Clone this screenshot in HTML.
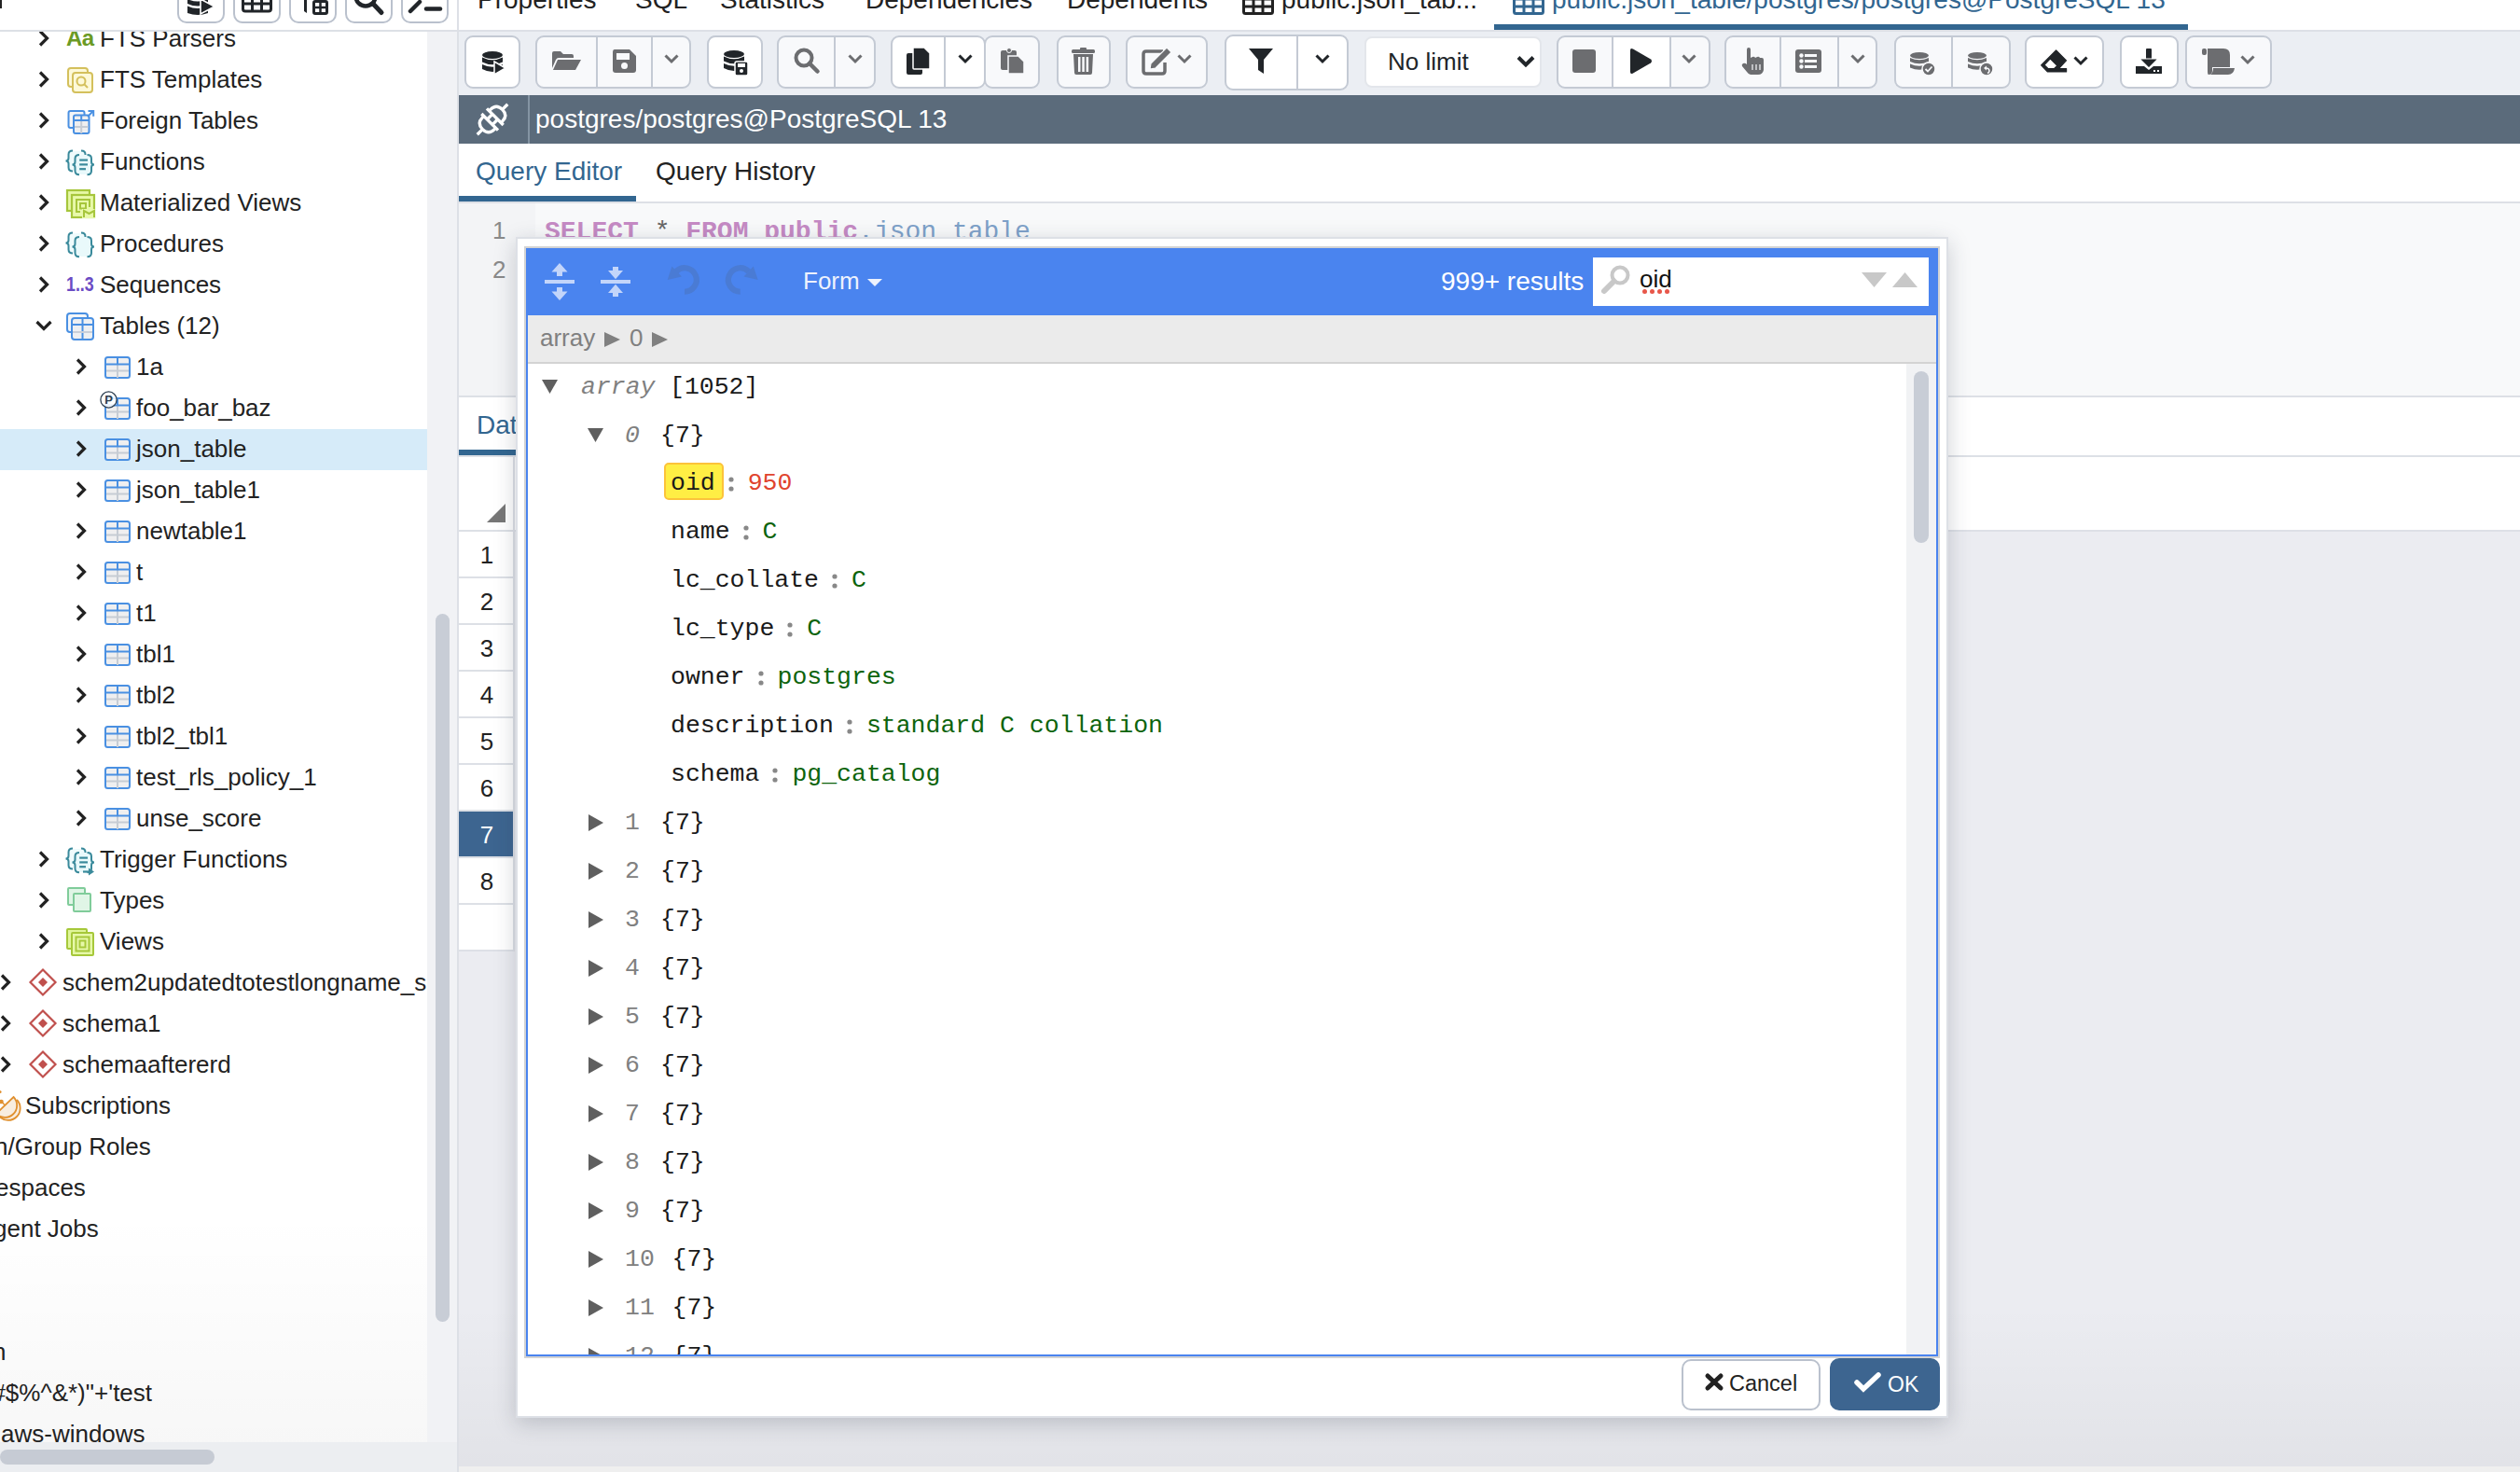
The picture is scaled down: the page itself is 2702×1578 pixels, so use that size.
<!DOCTYPE html><html><head><meta charset="utf-8"><style>
*{box-sizing:border-box;margin:0;padding:0}
html,body{width:2702px;height:1578px;overflow:hidden;background:#fff;font-family:'Liberation Sans', sans-serif;color:#222}
.a{position:absolute}
.t{position:absolute;white-space:nowrap;line-height:1}
svg{position:absolute;overflow:visible}
</style></head><body>
<div class="a" style="left:0px;top:34px;width:458px;height:1512px;background:#fff"></div>
<div class="a" style="left:458px;top:34px;width:32px;height:1512px;background:#f1f2f5"></div>
<div class="a" style="left:0px;top:1300px;width:458px;height:246px;background:linear-gradient(to bottom,rgba(0,0,0,0),rgba(0,0,0,0.03))"></div>
<div class="a" style="left:467px;top:658px;width:15px;height:759px;background:#c8cdd6;border-radius:8px"></div>
<div class="a" style="left:0px;top:1546px;width:490px;height:32px;background:#eceef1"></div>
<div class="a" style="left:0px;top:1554px;width:230px;height:16px;background:#c6cbd4;border-radius:8px"></div>
<svg style="left:41px;top:31.6px;" width="12" height="18" viewBox="0 0 12 18"><polyline points="2,1.5 9.5,9 2,16.5" fill="none" stroke="#222" stroke-width="3.2"/></svg>
<div class="t" style="left:71px;top:28.6px;font-size:24px;color:#6b9a25;font-family:'Liberation Sans', sans-serif;font-weight:bold;letter-spacing:-0.5px">Aa</div>
<div class="t" style="left:107px;top:27.5px;font-size:26px;color:#222;font-family:'Liberation Sans', sans-serif;">FTS Parsers</div>
<svg style="left:41px;top:75.6px;" width="12" height="18" viewBox="0 0 12 18"><polyline points="2,1.5 9.5,9 2,16.5" fill="none" stroke="#222" stroke-width="3.2"/></svg>
<svg style="left:72px;top:71.6px;" width="28" height="28" viewBox="0 0 28 28"><rect x="1" y="1" width="21" height="20" rx="3" fill="#fdf9d8" stroke="#d4c05c" stroke-width="2"/><rect x="6" y="6" width="21" height="21" rx="3" fill="#fdf9d8" stroke="#d4c05c" stroke-width="2"/><circle cx="15" cy="15" r="4.5" fill="none" stroke="#d4c05c" stroke-width="2"/><line x1="18" y1="18" x2="22" y2="22" stroke="#d4c05c" stroke-width="2"/></svg>
<div class="t" style="left:107px;top:71.5px;font-size:26px;color:#222;font-family:'Liberation Sans', sans-serif;">FTS Templates</div>
<svg style="left:41px;top:119.6px;" width="12" height="18" viewBox="0 0 12 18"><polyline points="2,1.5 9.5,9 2,16.5" fill="none" stroke="#222" stroke-width="3.2"/></svg>
<svg style="left:72px;top:114.6px;" width="30" height="30" viewBox="0 0 30 30"><rect x="1.5" y="4" width="17" height="18" rx="2" fill="#f4f5f7" stroke="#4a90e2" stroke-width="2"/><rect x="7" y="8.5" width="16.5" height="19.5" rx="2" fill="#efeff0" stroke="#4a90e2" stroke-width="2"/><line x1="15.2" y1="14" x2="15.2" y2="28" stroke="#c6ccd4" stroke-width="2"/><line x1="8" y1="21" x2="22.5" y2="21" stroke="#c6ccd4" stroke-width="2"/><line x1="7" y1="14" x2="23.5" y2="14" stroke="#4a90e2" stroke-width="2"/><line x1="15.2" y1="8.5" x2="15.2" y2="14" stroke="#4a90e2" stroke-width="2"/><line x1="22" y1="10" x2="28" y2="4" stroke="#4a90e2" stroke-width="2"/><polyline points="22.5,4 28.2,4 28.2,9.7" stroke="#4a90e2" stroke-width="2" fill="none"/></svg>
<div class="t" style="left:107px;top:115.5px;font-size:26px;color:#222;font-family:'Liberation Sans', sans-serif;">Foreign Tables</div>
<svg style="left:41px;top:163.6px;" width="12" height="18" viewBox="0 0 12 18"><polyline points="2,1.5 9.5,9 2,16.5" fill="none" stroke="#222" stroke-width="3.2"/></svg>
<svg style="left:69px;top:159.6px;" width="34" height="32" viewBox="0 0 34 32"><rect x="5" y="2" width="17" height="21" fill="#effbfc"/><path d="M9.0,1.4 Q4.5,1.4 4.5,5.4 L4.5,9.399999999999999 Q4.5,12.399999999999999 1.5,12.399999999999999 Q4.5,12.399999999999999 4.5,15.399999999999999 L4.5,19.4 Q4.5,23.4 9.0,23.4" fill="none" stroke="#3a8a9b" stroke-width="2"/><path d="M18.0,1.4 Q22.5,1.4 22.5,5.4 L22.5,9.399999999999999 Q22.5,12.399999999999999 25.5,12.399999999999999 Q22.5,12.399999999999999 22.5,15.399999999999999 L22.5,19.4 Q22.5,23.4 18.0,23.4" fill="none" stroke="#3a8a9b" stroke-width="2"/><rect x="11.5" y="6" width="17.5" height="21" fill="#e9f9fb"/><path d="M16.0,5.9 Q11.5,5.9 11.5,9.9 L11.5,13.55 Q11.5,16.55 8.5,16.55 Q11.5,16.55 11.5,19.55 L11.5,23.2 Q11.5,27.2 16.0,27.2" fill="none" stroke="#3a8a9b" stroke-width="2"/><path d="M24.5,5.9 Q29,5.9 29,9.9 L29,13.55 Q29,16.55 32,16.55 Q29,16.55 29,19.55 L29,23.2 Q29,27.2 24.5,27.2" fill="none" stroke="#3a8a9b" stroke-width="2"/><g stroke="#3a8a9b" stroke-width="2.2"><line x1="16.2" y1="11.6" x2="25" y2="11.6"/><line x1="16.2" y1="16.4" x2="25" y2="16.4"/><line x1="16.2" y1="21.2" x2="23" y2="21.2"/></g></svg>
<div class="t" style="left:107px;top:159.5px;font-size:26px;color:#222;font-family:'Liberation Sans', sans-serif;">Functions</div>
<svg style="left:41px;top:207.6px;" width="12" height="18" viewBox="0 0 12 18"><polyline points="2,1.5 9.5,9 2,16.5" fill="none" stroke="#222" stroke-width="3.2"/></svg>
<svg style="left:71px;top:202.6px;" width="31" height="31" viewBox="0 0 31 31"><rect x="1" y="1" width="24" height="22" fill="#e6f8a6" stroke="#a6c63c" stroke-width="2.2"/><rect x="6" y="6" width="24" height="24" fill="#e8f9aa" stroke="#a6c63c" stroke-width="2.2"/><path d="M15,24 L11,24 L11,11 L25,11 L25,19" fill="none" stroke="#a6c63c" stroke-width="2"/><rect x="15" y="15" width="6" height="5.5" fill="none" stroke="#a6c63c" stroke-width="2"/><rect x="17" y="21" width="14" height="10" fill="#e8f9aa"/><path d="M19,30 L19,23 L24.5,26 L30,23 L30,30" fill="none" stroke="#a6c63c" stroke-width="2"/></svg>
<div class="t" style="left:107px;top:203.5px;font-size:26px;color:#222;font-family:'Liberation Sans', sans-serif;">Materialized Views</div>
<svg style="left:41px;top:251.60000000000002px;" width="12" height="18" viewBox="0 0 12 18"><polyline points="2,1.5 9.5,9 2,16.5" fill="none" stroke="#222" stroke-width="3.2"/></svg>
<svg style="left:69px;top:247.60000000000002px;" width="34" height="32" viewBox="0 0 34 32"><rect x="5" y="2" width="17" height="21" fill="#effbfc"/><path d="M9.0,1.4 Q4.5,1.4 4.5,5.4 L4.5,9.399999999999999 Q4.5,12.399999999999999 1.5,12.399999999999999 Q4.5,12.399999999999999 4.5,15.399999999999999 L4.5,19.4 Q4.5,23.4 9.0,23.4" fill="none" stroke="#3a8a9b" stroke-width="2"/><path d="M18.0,1.4 Q22.5,1.4 22.5,5.4 L22.5,9.399999999999999 Q22.5,12.399999999999999 25.5,12.399999999999999 Q22.5,12.399999999999999 22.5,15.399999999999999 L22.5,19.4 Q22.5,23.4 18.0,23.4" fill="none" stroke="#3a8a9b" stroke-width="2"/><rect x="11.5" y="6" width="17.5" height="21" fill="#e9f9fb"/><path d="M16.0,5.9 Q11.5,5.9 11.5,9.9 L11.5,13.55 Q11.5,16.55 8.5,16.55 Q11.5,16.55 11.5,19.55 L11.5,23.2 Q11.5,27.2 16.0,27.2" fill="none" stroke="#3a8a9b" stroke-width="2"/><path d="M24.5,5.9 Q29,5.9 29,9.9 L29,13.55 Q29,16.55 32,16.55 Q29,16.55 29,19.55 L29,23.2 Q29,27.2 24.5,27.2" fill="none" stroke="#3a8a9b" stroke-width="2"/></svg>
<div class="t" style="left:107px;top:247.5px;font-size:26px;color:#222;font-family:'Liberation Sans', sans-serif;">Procedures</div>
<svg style="left:41px;top:295.6px;" width="12" height="18" viewBox="0 0 12 18"><polyline points="2,1.5 9.5,9 2,16.5" fill="none" stroke="#222" stroke-width="3.2"/></svg>
<div class="t" style="left:71px;top:294.4px;font-size:22px;color:#6a4bc4;font-family:'Liberation Sans', sans-serif;font-weight:bold;transform:scaleX(0.81);transform-origin:0 0">1..3</div>
<div class="t" style="left:107px;top:291.5px;font-size:26px;color:#222;font-family:'Liberation Sans', sans-serif;">Sequences</div>
<svg style="left:38px;top:342.6px;" width="18" height="12" viewBox="0 0 18 12"><polyline points="1.5,2 9,9.5 16.5,2" fill="none" stroke="#222" stroke-width="3.2"/></svg>
<svg style="left:71px;top:334.6px;" width="30" height="30" viewBox="0 0 30 30"><rect x="1" y="1" width="22" height="20" rx="3" fill="#f4f6f8" stroke="#4a90e2" stroke-width="2"/><rect x="6" y="6" width="23" height="23" rx="3" fill="#eef0f2" stroke="#4a90e2" stroke-width="2"/><line x1="6" y1="13" x2="29" y2="13" stroke="#4a90e2" stroke-width="2"/><line x1="17.5" y1="6" x2="17.5" y2="29" stroke="#4a90e2" stroke-width="2"/><line x1="7" y1="21" x2="28" y2="21" stroke="#c9cfd8" stroke-width="2"/></svg>
<div class="t" style="left:107px;top:335.5px;font-size:26px;color:#222;font-family:'Liberation Sans', sans-serif;">Tables (12)</div>
<svg style="left:41px;top:911.6px;" width="12" height="18" viewBox="0 0 12 18"><polyline points="2,1.5 9.5,9 2,16.5" fill="none" stroke="#222" stroke-width="3.2"/></svg>
<svg style="left:69px;top:907.6px;" width="34" height="32" viewBox="0 0 34 32"><rect x="5" y="2" width="17" height="21" fill="#effbfc"/><path d="M9.0,1.4 Q4.5,1.4 4.5,5.4 L4.5,9.399999999999999 Q4.5,12.399999999999999 1.5,12.399999999999999 Q4.5,12.399999999999999 4.5,15.399999999999999 L4.5,19.4 Q4.5,23.4 9.0,23.4" fill="none" stroke="#3a8a9b" stroke-width="2"/><path d="M18.0,1.4 Q22.5,1.4 22.5,5.4 L22.5,9.399999999999999 Q22.5,12.399999999999999 25.5,12.399999999999999 Q22.5,12.399999999999999 22.5,15.399999999999999 L22.5,19.4 Q22.5,23.4 18.0,23.4" fill="none" stroke="#3a8a9b" stroke-width="2"/><rect x="11.5" y="6" width="17.5" height="21" fill="#e9f9fb"/><path d="M16.0,5.9 Q11.5,5.9 11.5,9.9 L11.5,13.55 Q11.5,16.55 8.5,16.55 Q11.5,16.55 11.5,19.55 L11.5,23.2 Q11.5,27.2 16.0,27.2" fill="none" stroke="#3a8a9b" stroke-width="2"/><path d="M24.5,5.9 Q29,5.9 29,9.9 L29,13.55 Q29,16.55 32,16.55 Q29,16.55 29,19.55 L29,23.2 Q29,27.2 24.5,27.2" fill="none" stroke="#3a8a9b" stroke-width="2"/><g stroke="#3a8a9b" stroke-width="2.2"><line x1="16.2" y1="11.6" x2="25" y2="11.6"/><line x1="16.2" y1="16.4" x2="25" y2="16.4"/><line x1="16.2" y1="21.2" x2="23" y2="21.2"/></g><line x1="20" y1="26.5" x2="28" y2="26.5" stroke="#3a8a9b" stroke-width="2.2"/><polygon points="26,22.5 32,26.5 26,30.5" fill="#3a8a9b"/></svg>
<div class="t" style="left:107px;top:907.5px;font-size:26px;color:#222;font-family:'Liberation Sans', sans-serif;">Trigger Functions</div>
<svg style="left:41px;top:955.6px;" width="12" height="18" viewBox="0 0 12 18"><polyline points="2,1.5 9.5,9 2,16.5" fill="none" stroke="#222" stroke-width="3.2"/></svg>
<svg style="left:72px;top:950.6px;" width="28" height="28" viewBox="0 0 28 28"><rect x="1" y="1" width="18" height="18" rx="1" fill="#e0f5e6" stroke="#80cc9a" stroke-width="2"/><rect x="7" y="7" width="18" height="19" rx="1" fill="#e0f5e6" stroke="#80cc9a" stroke-width="2"/></svg>
<div class="t" style="left:107px;top:951.5px;font-size:26px;color:#222;font-family:'Liberation Sans', sans-serif;">Types</div>
<svg style="left:41px;top:999.6px;" width="12" height="18" viewBox="0 0 12 18"><polyline points="2,1.5 9.5,9 2,16.5" fill="none" stroke="#222" stroke-width="3.2"/></svg>
<svg style="left:71px;top:994.6px;" width="30" height="30" viewBox="0 0 30 30"><rect x="1" y="1" width="21" height="21" rx="1" fill="#dff59a" stroke="#a6c83a" stroke-width="2"/><rect x="6" y="5" width="23" height="24" rx="1" fill="#e6f8a8" stroke="#a6c83a" stroke-width="2"/><rect x="10.5" y="9.5" width="14" height="15" fill="none" stroke="#a6c83a" stroke-width="2"/><rect x="14.5" y="13.5" width="6" height="7" fill="none" stroke="#a6c83a" stroke-width="2"/></svg>
<div class="t" style="left:107px;top:995.5px;font-size:26px;color:#222;font-family:'Liberation Sans', sans-serif;">Views</div>

<div class="a" style="left:0px;top:460px;width:458px;height:44px;background:#d6ebf9"></div>
<svg style="left:81px;top:383.6px;" width="12" height="18" viewBox="0 0 12 18"><polyline points="2,1.5 9.5,9 2,16.5" fill="none" stroke="#222" stroke-width="3.2"/></svg>
<svg style="left:112px;top:381.6px;" width="28" height="24" viewBox="0 0 28 24"><rect x="1" y="1" width="26" height="22" rx="2.5" fill="#efeff0" stroke="#4a90e2" stroke-width="2"/><line x1="14" y1="9" x2="14" y2="23" stroke="#c6ccd4" stroke-width="2"/><line x1="2" y1="15.5" x2="26" y2="15.5" stroke="#c6ccd4" stroke-width="2"/><line x1="1" y1="8.5" x2="27" y2="8.5" stroke="#4a90e2" stroke-width="2"/><line x1="14" y1="1" x2="14" y2="9" stroke="#4a90e2" stroke-width="2"/></svg>
<div class="t" style="left:146px;top:379.5px;font-size:26px;color:#222;font-family:'Liberation Sans', sans-serif;">1a</div>
<svg style="left:81px;top:427.6px;" width="12" height="18" viewBox="0 0 12 18"><polyline points="2,1.5 9.5,9 2,16.5" fill="none" stroke="#222" stroke-width="3.2"/></svg>
<svg style="left:112px;top:425.6px;" width="28" height="24" viewBox="0 0 28 24"><rect x="1" y="1" width="26" height="22" rx="2.5" fill="#efeff0" stroke="#4a90e2" stroke-width="2"/><line x1="14" y1="9" x2="14" y2="23" stroke="#c6ccd4" stroke-width="2"/><line x1="2" y1="15.5" x2="26" y2="15.5" stroke="#c6ccd4" stroke-width="2"/><line x1="1" y1="8.5" x2="27" y2="8.5" stroke="#4a90e2" stroke-width="2"/><line x1="14" y1="1" x2="14" y2="9" stroke="#4a90e2" stroke-width="2"/></svg>
<svg style="left:107px;top:418.6px;" width="20" height="20" viewBox="0 0 20 20"><circle cx="9.5" cy="9.5" r="8.6" fill="#fff" fill-opacity="0.85" stroke="#2c3e50" stroke-width="1.3"/><text x="9.6" y="14" font-size="13" font-weight="bold" text-anchor="middle" fill="#2c3e50" font-family="Liberation Sans">P</text></svg>
<div class="t" style="left:146px;top:423.5px;font-size:26px;color:#222;font-family:'Liberation Sans', sans-serif;">foo_bar_baz</div>
<svg style="left:81px;top:471.6px;" width="12" height="18" viewBox="0 0 12 18"><polyline points="2,1.5 9.5,9 2,16.5" fill="none" stroke="#222" stroke-width="3.2"/></svg>
<svg style="left:112px;top:469.6px;" width="28" height="24" viewBox="0 0 28 24"><rect x="1" y="1" width="26" height="22" rx="2.5" fill="#efeff0" stroke="#4a90e2" stroke-width="2"/><line x1="14" y1="9" x2="14" y2="23" stroke="#c6ccd4" stroke-width="2"/><line x1="2" y1="15.5" x2="26" y2="15.5" stroke="#c6ccd4" stroke-width="2"/><line x1="1" y1="8.5" x2="27" y2="8.5" stroke="#4a90e2" stroke-width="2"/><line x1="14" y1="1" x2="14" y2="9" stroke="#4a90e2" stroke-width="2"/></svg>
<div class="t" style="left:146px;top:467.5px;font-size:26px;color:#222;font-family:'Liberation Sans', sans-serif;">json_table</div>
<svg style="left:81px;top:515.6px;" width="12" height="18" viewBox="0 0 12 18"><polyline points="2,1.5 9.5,9 2,16.5" fill="none" stroke="#222" stroke-width="3.2"/></svg>
<svg style="left:112px;top:513.6px;" width="28" height="24" viewBox="0 0 28 24"><rect x="1" y="1" width="26" height="22" rx="2.5" fill="#efeff0" stroke="#4a90e2" stroke-width="2"/><line x1="14" y1="9" x2="14" y2="23" stroke="#c6ccd4" stroke-width="2"/><line x1="2" y1="15.5" x2="26" y2="15.5" stroke="#c6ccd4" stroke-width="2"/><line x1="1" y1="8.5" x2="27" y2="8.5" stroke="#4a90e2" stroke-width="2"/><line x1="14" y1="1" x2="14" y2="9" stroke="#4a90e2" stroke-width="2"/></svg>
<div class="t" style="left:146px;top:511.5px;font-size:26px;color:#222;font-family:'Liberation Sans', sans-serif;">json_table1</div>
<svg style="left:81px;top:559.6px;" width="12" height="18" viewBox="0 0 12 18"><polyline points="2,1.5 9.5,9 2,16.5" fill="none" stroke="#222" stroke-width="3.2"/></svg>
<svg style="left:112px;top:557.6px;" width="28" height="24" viewBox="0 0 28 24"><rect x="1" y="1" width="26" height="22" rx="2.5" fill="#efeff0" stroke="#4a90e2" stroke-width="2"/><line x1="14" y1="9" x2="14" y2="23" stroke="#c6ccd4" stroke-width="2"/><line x1="2" y1="15.5" x2="26" y2="15.5" stroke="#c6ccd4" stroke-width="2"/><line x1="1" y1="8.5" x2="27" y2="8.5" stroke="#4a90e2" stroke-width="2"/><line x1="14" y1="1" x2="14" y2="9" stroke="#4a90e2" stroke-width="2"/></svg>
<div class="t" style="left:146px;top:555.5px;font-size:26px;color:#222;font-family:'Liberation Sans', sans-serif;">newtable1</div>
<svg style="left:81px;top:603.6px;" width="12" height="18" viewBox="0 0 12 18"><polyline points="2,1.5 9.5,9 2,16.5" fill="none" stroke="#222" stroke-width="3.2"/></svg>
<svg style="left:112px;top:601.6px;" width="28" height="24" viewBox="0 0 28 24"><rect x="1" y="1" width="26" height="22" rx="2.5" fill="#efeff0" stroke="#4a90e2" stroke-width="2"/><line x1="14" y1="9" x2="14" y2="23" stroke="#c6ccd4" stroke-width="2"/><line x1="2" y1="15.5" x2="26" y2="15.5" stroke="#c6ccd4" stroke-width="2"/><line x1="1" y1="8.5" x2="27" y2="8.5" stroke="#4a90e2" stroke-width="2"/><line x1="14" y1="1" x2="14" y2="9" stroke="#4a90e2" stroke-width="2"/></svg>
<div class="t" style="left:146px;top:599.5px;font-size:26px;color:#222;font-family:'Liberation Sans', sans-serif;">t</div>
<svg style="left:81px;top:647.6px;" width="12" height="18" viewBox="0 0 12 18"><polyline points="2,1.5 9.5,9 2,16.5" fill="none" stroke="#222" stroke-width="3.2"/></svg>
<svg style="left:112px;top:645.6px;" width="28" height="24" viewBox="0 0 28 24"><rect x="1" y="1" width="26" height="22" rx="2.5" fill="#efeff0" stroke="#4a90e2" stroke-width="2"/><line x1="14" y1="9" x2="14" y2="23" stroke="#c6ccd4" stroke-width="2"/><line x1="2" y1="15.5" x2="26" y2="15.5" stroke="#c6ccd4" stroke-width="2"/><line x1="1" y1="8.5" x2="27" y2="8.5" stroke="#4a90e2" stroke-width="2"/><line x1="14" y1="1" x2="14" y2="9" stroke="#4a90e2" stroke-width="2"/></svg>
<div class="t" style="left:146px;top:643.5px;font-size:26px;color:#222;font-family:'Liberation Sans', sans-serif;">t1</div>
<svg style="left:81px;top:691.6px;" width="12" height="18" viewBox="0 0 12 18"><polyline points="2,1.5 9.5,9 2,16.5" fill="none" stroke="#222" stroke-width="3.2"/></svg>
<svg style="left:112px;top:689.6px;" width="28" height="24" viewBox="0 0 28 24"><rect x="1" y="1" width="26" height="22" rx="2.5" fill="#efeff0" stroke="#4a90e2" stroke-width="2"/><line x1="14" y1="9" x2="14" y2="23" stroke="#c6ccd4" stroke-width="2"/><line x1="2" y1="15.5" x2="26" y2="15.5" stroke="#c6ccd4" stroke-width="2"/><line x1="1" y1="8.5" x2="27" y2="8.5" stroke="#4a90e2" stroke-width="2"/><line x1="14" y1="1" x2="14" y2="9" stroke="#4a90e2" stroke-width="2"/></svg>
<div class="t" style="left:146px;top:687.5px;font-size:26px;color:#222;font-family:'Liberation Sans', sans-serif;">tbl1</div>
<svg style="left:81px;top:735.6px;" width="12" height="18" viewBox="0 0 12 18"><polyline points="2,1.5 9.5,9 2,16.5" fill="none" stroke="#222" stroke-width="3.2"/></svg>
<svg style="left:112px;top:733.6px;" width="28" height="24" viewBox="0 0 28 24"><rect x="1" y="1" width="26" height="22" rx="2.5" fill="#efeff0" stroke="#4a90e2" stroke-width="2"/><line x1="14" y1="9" x2="14" y2="23" stroke="#c6ccd4" stroke-width="2"/><line x1="2" y1="15.5" x2="26" y2="15.5" stroke="#c6ccd4" stroke-width="2"/><line x1="1" y1="8.5" x2="27" y2="8.5" stroke="#4a90e2" stroke-width="2"/><line x1="14" y1="1" x2="14" y2="9" stroke="#4a90e2" stroke-width="2"/></svg>
<div class="t" style="left:146px;top:731.5px;font-size:26px;color:#222;font-family:'Liberation Sans', sans-serif;">tbl2</div>
<svg style="left:81px;top:779.6px;" width="12" height="18" viewBox="0 0 12 18"><polyline points="2,1.5 9.5,9 2,16.5" fill="none" stroke="#222" stroke-width="3.2"/></svg>
<svg style="left:112px;top:777.6px;" width="28" height="24" viewBox="0 0 28 24"><rect x="1" y="1" width="26" height="22" rx="2.5" fill="#efeff0" stroke="#4a90e2" stroke-width="2"/><line x1="14" y1="9" x2="14" y2="23" stroke="#c6ccd4" stroke-width="2"/><line x1="2" y1="15.5" x2="26" y2="15.5" stroke="#c6ccd4" stroke-width="2"/><line x1="1" y1="8.5" x2="27" y2="8.5" stroke="#4a90e2" stroke-width="2"/><line x1="14" y1="1" x2="14" y2="9" stroke="#4a90e2" stroke-width="2"/></svg>
<div class="t" style="left:146px;top:775.5px;font-size:26px;color:#222;font-family:'Liberation Sans', sans-serif;">tbl2_tbl1</div>
<svg style="left:81px;top:823.6px;" width="12" height="18" viewBox="0 0 12 18"><polyline points="2,1.5 9.5,9 2,16.5" fill="none" stroke="#222" stroke-width="3.2"/></svg>
<svg style="left:112px;top:821.6px;" width="28" height="24" viewBox="0 0 28 24"><rect x="1" y="1" width="26" height="22" rx="2.5" fill="#efeff0" stroke="#4a90e2" stroke-width="2"/><line x1="14" y1="9" x2="14" y2="23" stroke="#c6ccd4" stroke-width="2"/><line x1="2" y1="15.5" x2="26" y2="15.5" stroke="#c6ccd4" stroke-width="2"/><line x1="1" y1="8.5" x2="27" y2="8.5" stroke="#4a90e2" stroke-width="2"/><line x1="14" y1="1" x2="14" y2="9" stroke="#4a90e2" stroke-width="2"/></svg>
<div class="t" style="left:146px;top:819.5px;font-size:26px;color:#222;font-family:'Liberation Sans', sans-serif;">test_rls_policy_1</div>
<svg style="left:81px;top:867.6px;" width="12" height="18" viewBox="0 0 12 18"><polyline points="2,1.5 9.5,9 2,16.5" fill="none" stroke="#222" stroke-width="3.2"/></svg>
<svg style="left:112px;top:865.6px;" width="28" height="24" viewBox="0 0 28 24"><rect x="1" y="1" width="26" height="22" rx="2.5" fill="#efeff0" stroke="#4a90e2" stroke-width="2"/><line x1="14" y1="9" x2="14" y2="23" stroke="#c6ccd4" stroke-width="2"/><line x1="2" y1="15.5" x2="26" y2="15.5" stroke="#c6ccd4" stroke-width="2"/><line x1="1" y1="8.5" x2="27" y2="8.5" stroke="#4a90e2" stroke-width="2"/><line x1="14" y1="1" x2="14" y2="9" stroke="#4a90e2" stroke-width="2"/></svg>
<div class="t" style="left:146px;top:863.5px;font-size:26px;color:#222;font-family:'Liberation Sans', sans-serif;">unse_score</div>
<svg style="left:0px;top:1043.6px;" width="12" height="18" viewBox="0 0 12 18"><polyline points="2,1.5 9.5,9 2,16.5" fill="none" stroke="#222" stroke-width="3.2"/></svg>
<svg style="left:31px;top:1037.6px;" width="30" height="30" viewBox="0 0 30 30"><polygon points="15,1.5 28.5,15 15,28.5 1.5,15" fill="#fff" stroke="#c0504d" stroke-width="2.2"/><polygon points="15,10 20,15 15,20 10,15" fill="#c0504d"/></svg>
<div class="t" style="left:67px;top:1039.5px;font-size:26px;color:#222;font-family:'Liberation Sans', sans-serif;">schem2updatedtotestlongname_s</div>
<svg style="left:0px;top:1087.6px;" width="12" height="18" viewBox="0 0 12 18"><polyline points="2,1.5 9.5,9 2,16.5" fill="none" stroke="#222" stroke-width="3.2"/></svg>
<svg style="left:31px;top:1081.6px;" width="30" height="30" viewBox="0 0 30 30"><polygon points="15,1.5 28.5,15 15,28.5 1.5,15" fill="#fff" stroke="#c0504d" stroke-width="2.2"/><polygon points="15,10 20,15 15,20 10,15" fill="#c0504d"/></svg>
<div class="t" style="left:67px;top:1083.5px;font-size:26px;color:#222;font-family:'Liberation Sans', sans-serif;">schema1</div>
<svg style="left:0px;top:1131.6px;" width="12" height="18" viewBox="0 0 12 18"><polyline points="2,1.5 9.5,9 2,16.5" fill="none" stroke="#222" stroke-width="3.2"/></svg>
<svg style="left:31px;top:1125.6px;" width="30" height="30" viewBox="0 0 30 30"><polygon points="15,1.5 28.5,15 15,28.5 1.5,15" fill="#fff" stroke="#c0504d" stroke-width="2.2"/><polygon points="15,10 20,15 15,20 10,15" fill="#c0504d"/></svg>
<div class="t" style="left:67px;top:1127.5px;font-size:26px;color:#222;font-family:'Liberation Sans', sans-serif;">schemaaftererd</div>
<svg style="left:-10px;top:1160px;" width="40" height="50" viewBox="0 0 40 50"><path d="M28,19 A12.9,12.9 0 0 1 9.5,37" fill="#f8ede0" stroke="#e0902f" stroke-width="1.8"/><path d="M24.5,16 A12.9,12.9 0 0 1 6,34 Z" fill="#f8ede0" stroke="#e0902f" stroke-width="1.8"/><circle cx="11.5" cy="21" r="2.3" fill="#e0902f"/><line x1="11.5" y1="21" x2="15" y2="24.5" stroke="#e0902f" stroke-width="1.5"/><circle cx="10" cy="10.5" r="1.6" fill="#e0902f"/></svg>
<div class="t" style="left:27px;top:1171.5px;font-size:26px;color:#222;font-family:'Liberation Sans', sans-serif;">Subscriptions</div>
<div class="t" style="left:-6px;top:1215.5px;font-size:26px;color:#222;font-family:'Liberation Sans', sans-serif;">n/Group Roles</div>
<div class="t" style="left:-5px;top:1259.5px;font-size:26px;color:#222;font-family:'Liberation Sans', sans-serif;">espaces</div>
<div class="t" style="left:-7px;top:1303.5px;font-size:26px;color:#222;font-family:'Liberation Sans', sans-serif;">gent Jobs</div>
<div class="t" style="left:-8px;top:1435.5px;font-size:26px;color:#222;font-family:'Liberation Sans', sans-serif;">n</div>
<div class="t" style="left:-8.6px;top:1479.5px;font-size:26px;color:#222;font-family:'Liberation Sans', sans-serif;">#$%^&amp;*)"+'test</div>
<div class="t" style="left:1px;top:1523.5px;font-size:26px;color:#222;font-family:'Liberation Sans', sans-serif;">aws-windows</div>
<div class="a" style="left:0px;top:0px;width:490px;height:32px;background:#fff"></div>
<div class="a" style="left:190px;top:-30px;width:51px;height:55px;border:2px solid #bac1cd;border-radius:10px;background:#fff"></div>
<div class="a" style="left:250px;top:-30px;width:51px;height:55px;border:2px solid #bac1cd;border-radius:10px;background:#fff"></div>
<div class="a" style="left:310px;top:-30px;width:51px;height:55px;border:2px solid #bac1cd;border-radius:10px;background:#fff"></div>
<div class="a" style="left:370px;top:-30px;width:51px;height:55px;border:2px solid #bac1cd;border-radius:10px;background:#fff"></div>
<div class="a" style="left:430px;top:-30px;width:51px;height:55px;border:2px solid #bac1cd;border-radius:10px;background:#fff"></div>
<div class="a" style="left:0px;top:0px;width:2px;height:9px;background:#222"></div>
<svg style="left:201px;top:-6px;" width="30" height="26" viewBox="0 0 30 26"><ellipse cx="11" cy="2" rx="11" ry="4" fill="#212529"/><path d="M0,5 Q11,10 22,5 L22,10 Q11,15 0,10Z" fill="#212529"/><path d="M0,12.5 Q11,17.5 22,12.5 L22,20 Q11,24 0,20Z" fill="#212529"/><polygon points="14,5 29,13 14,21" fill="#212529" stroke="#fff" stroke-width="1.6"/></svg>
<svg style="left:259px;top:-8px;" width="33" height="22" viewBox="0 0 33 22"><rect x="1.5" y="-4" width="30" height="24" rx="2.5" fill="none" stroke="#212529" stroke-width="3"/><line x1="1.5" y1="4" x2="31.5" y2="4" stroke="#212529" stroke-width="3"/><line x1="1.5" y1="12" x2="31.5" y2="12" stroke="#212529" stroke-width="3"/><line x1="11.5" y1="-4" x2="11.5" y2="20" stroke="#212529" stroke-width="3"/><line x1="21.5" y1="-4" x2="21.5" y2="20" stroke="#212529" stroke-width="3"/></svg>
<svg style="left:326px;top:-8px;" width="26" height="24" viewBox="0 0 26 24"><path d="M0,8 L3,8 L3,22 L0,20Z" fill="#212529"/><rect x="10.5" y="9.5" width="14" height="13" rx="1.5" fill="none" stroke="#212529" stroke-width="3"/><line x1="10.5" y1="16" x2="24.5" y2="16" stroke="#212529" stroke-width="2.5"/><line x1="17.5" y1="9.5" x2="17.5" y2="22.5" stroke="#212529" stroke-width="2.5"/></svg>
<svg style="left:379px;top:-9px;" width="34" height="30" viewBox="0 0 34 30"><circle cx="13" cy="5" r="10.5" fill="none" stroke="#212529" stroke-width="4.5"/><line x1="21.5" y1="13.5" x2="30" y2="22.5" stroke="#212529" stroke-width="5" stroke-linecap="round"/></svg>
<svg style="left:438px;top:-2px;" width="36" height="18" viewBox="0 0 36 18"><polyline points="2,14 12,4" fill="none" stroke="#212529" stroke-width="4.5" stroke-linecap="round"/><line x1="19" y1="11.5" x2="34" y2="11.5" stroke="#212529" stroke-width="4.5" stroke-linecap="round"/></svg>
<div class="a" style="left:490px;top:0px;width:2px;height:1578px;background:#dde0e6"></div>
<div class="a" style="left:0px;top:32px;width:490px;height:2px;background:#dde0e6"></div>
<div class="a" style="left:492px;top:0px;width:2210px;height:32px;background:#fff"></div>
<div class="a" style="left:492px;top:32px;width:2210px;height:2px;background:#dde0e6"></div>
<div class="t" style="left:512px;top:-13.8px;font-size:28px;color:#222;font-family:'Liberation Sans', sans-serif;">Properties</div>
<div class="t" style="left:681px;top:-13.8px;font-size:28px;color:#222;font-family:'Liberation Sans', sans-serif;">SQL</div>
<div class="t" style="left:772px;top:-13.8px;font-size:28px;color:#222;font-family:'Liberation Sans', sans-serif;">Statistics</div>
<div class="t" style="left:928px;top:-13.8px;font-size:28px;color:#222;font-family:'Liberation Sans', sans-serif;">Dependencies</div>
<div class="t" style="left:1144px;top:-13.8px;font-size:28px;color:#222;font-family:'Liberation Sans', sans-serif;">Dependents</div>
<svg style="left:1332px;top:-10px;" width="34" height="26" viewBox="0 0 34 26"><rect x="1.5" y="1.5" width="31" height="23" rx="2" fill="none" stroke="#222" stroke-width="3"/><line x1="1.5" y1="9" x2="32.5" y2="9" stroke="#222" stroke-width="3"/><line x1="1.5" y1="17" x2="32.5" y2="17" stroke="#222" stroke-width="3"/><line x1="12" y1="9" x2="12" y2="25" stroke="#222" stroke-width="3"/><line x1="22" y1="9" x2="22" y2="25" stroke="#222" stroke-width="3"/></svg>
<div class="t" style="left:1374px;top:-13.8px;font-size:28px;color:#222;font-family:'Liberation Sans', sans-serif;">public.json_tab...</div>
<svg style="left:1622px;top:-10px;" width="34" height="26" viewBox="0 0 34 26"><rect x="1.5" y="1.5" width="31" height="23" rx="2" fill="none" stroke="#326690" stroke-width="3"/><line x1="1.5" y1="9" x2="32.5" y2="9" stroke="#326690" stroke-width="3"/><line x1="1.5" y1="17" x2="32.5" y2="17" stroke="#326690" stroke-width="3"/><line x1="12" y1="9" x2="12" y2="25" stroke="#326690" stroke-width="3"/><line x1="22" y1="9" x2="22" y2="25" stroke="#326690" stroke-width="3"/></svg>
<div class="t" style="left:1664px;top:-13.8px;font-size:28px;color:#326690;font-family:'Liberation Sans', sans-serif;">public.json_table/postgres/postgres@PostgreSQL 13</div>
<div class="a" style="left:1602px;top:26px;width:744px;height:6px;background:#326690"></div>
<div class="a" style="left:492px;top:34px;width:2210px;height:68px;background:#ebeef3"></div>
<div class="a" style="left:498px;top:38px;width:60px;height:57px;background:#fff;border:2px solid #c4cad4;border-radius:9px;overflow:hidden"></div>
<svg style="left:517px;top:55px;" width="22" height="24" viewBox="0 0 22 24"><ellipse cx="11" cy="4" rx="11" ry="4" fill="#212529"/><path d="M0,6.5 Q11,12 22,6.5 L22,11.5 Q11,17 0,11.5Z" fill="#212529"/><path d="M0,14 Q11,19.5 22,14 L22,19 Q11,25 0,19Z" fill="#212529"/></svg>
<svg style="left:529px;top:65px;" width="14" height="16" viewBox="0 0 14 16"><polygon points="1,1 13,8 1,15" fill="#212529" stroke="#fff" stroke-width="1.5"/></svg>
<div class="a" style="left:574px;top:38px;width:167px;height:57px;background:#f8f9fb;border:2px solid #c4cad4;border-radius:9px;overflow:hidden"><div class="a" style="left:63px;top:0;width:2px;height:100%;background:#c4cad4"></div><div class="a" style="left:122px;top:0;width:2px;height:100%;background:#c4cad4"></div></div>
<svg style="left:591px;top:54px;" width="32" height="22" viewBox="0 0 32 22"><path d="M1,3 Q1,1 3,1 L10,1 L13,4 L22,4 Q24,4 24,6 L24,8 L8,8 Q6,8 5,10 L1,19 Z" fill="#6c6d70"/><path d="M7,10 L32,10 L26,21 L2,21 Z" fill="#6c6d70"/></svg>
<svg style="left:657px;top:53px;" width="25" height="25" viewBox="0 0 25 25"><path d="M2,0 L18,0 L25,7 L25,22 Q25,25 22,25 L3,25 Q0,25 0,22 L0,3 Q0,0 2,0Z" fill="#6c6d70"/><rect x="4" y="4" width="14" height="7" fill="#f8f9fb"/><circle cx="12.5" cy="17.5" r="3.5" fill="#f8f9fb"/></svg>
<svg style="left:712px;top:58px;" width="16" height="10" viewBox="0 0 16 10"><polyline points="1.5,1.5 8,8 14.5,1.5" fill="none" stroke="#6c6d70" stroke-width="3"/></svg>
<div class="a" style="left:758px;top:38px;width:60px;height:57px;background:#fff;border:2px solid #c4cad4;border-radius:9px;overflow:hidden"></div>
<svg style="left:776px;top:54px;" width="22" height="24" viewBox="0 0 22 24"><ellipse cx="11" cy="4" rx="11" ry="4" fill="#212529"/><path d="M0,6.5 Q11,12 22,6.5 L22,11.5 Q11,17 0,11.5Z" fill="#212529"/><path d="M0,14 Q11,19.5 22,14 L22,19 Q11,25 0,19Z" fill="#212529"/></svg>
<svg style="left:788px;top:66px;" width="14" height="15" viewBox="0 0 14 15"><rect x="0" y="0" width="14" height="15" rx="2" fill="#212529" stroke="#fff" stroke-width="1.5"/><rect x="3" y="2" width="8" height="4" fill="#fff"/><circle cx="7" cy="10" r="2" fill="#fff"/></svg>
<div class="a" style="left:833px;top:38px;width:106px;height:57px;background:#f8f9fb;border:2px solid #c4cad4;border-radius:9px;overflow:hidden"><div class="a" style="left:59px;top:0;width:2px;height:100%;background:#c4cad4"></div></div>
<svg style="left:851px;top:51px;" width="28" height="28" viewBox="0 0 28 28"><circle cx="11" cy="11" r="8.5" fill="none" stroke="#6c6d70" stroke-width="4"/><line x1="17" y1="17" x2="25.5" y2="25.5" stroke="#6c6d70" stroke-width="4.5" stroke-linecap="round"/></svg>
<svg style="left:909px;top:58px;" width="16" height="10" viewBox="0 0 16 10"><polyline points="1.5,1.5 8,8 14.5,1.5" fill="none" stroke="#6c6d70" stroke-width="3"/></svg>
<div class="a" style="left:1055px;top:38px;width:60px;height:57px;background:#f8f9fb;border:2px solid #c4cad4;border-radius:9px;overflow:hidden"></div>
<div class="a" style="left:955px;top:38px;width:102px;height:57px;background:#fff;border:2px solid #c4cad4;border-radius:9px;overflow:hidden"><div class="a" style="left:55px;top:0;width:2px;height:100%;background:#c4cad4"></div></div>
<svg style="left:972px;top:51px;" width="25" height="29" viewBox="0 0 25 29"><rect x="0" y="6" width="17" height="23" rx="2" fill="#212529"/><path d="M7,0 L19,0 L25,6 L25,22 Q25,23 24,23 L8,23 Q7,23 7,22Z" fill="#212529" stroke="#fff" stroke-width="1.5"/></svg>
<svg style="left:1027px;top:58px;" width="16" height="10" viewBox="0 0 16 10"><polyline points="1.5,1.5 8,8 14.5,1.5" fill="none" stroke="#212529" stroke-width="3"/></svg>
<svg style="left:1073px;top:51px;" width="25" height="29" viewBox="0 0 25 29"><rect x="0" y="3" width="17" height="21" rx="2" fill="#6c6d70"/><circle cx="9" cy="3" r="2.5" fill="#6c6d70" stroke="#f8f9fb" stroke-width="1"/><path d="M8,9 L19,9 L25,15 L25,28 L8,28Z" fill="#6c6d70" stroke="#f8f9fb" stroke-width="1.5"/></svg>
<div class="a" style="left:1133px;top:38px;width:58px;height:57px;background:#f8f9fb;border:2px solid #c4cad4;border-radius:9px;overflow:hidden"></div>
<svg style="left:1149px;top:51px;" width="25" height="29" viewBox="0 0 25 29"><rect x="0" y="2" width="25" height="4" rx="1.5" fill="#6c6d70"/><rect x="9" y="0" width="7" height="3" rx="1" fill="#6c6d70"/><path d="M2,7 L23,7 L22,27 Q22,29 20,29 L5,29 Q3,29 3,27Z" fill="#6c6d70"/><rect x="7" y="10" width="2.5" height="16" fill="#f8f9fb"/><rect x="11.3" y="10" width="2.5" height="16" fill="#f8f9fb"/><rect x="15.6" y="10" width="2.5" height="16" fill="#f8f9fb"/></svg>
<div class="a" style="left:1207px;top:38px;width:88px;height:57px;background:#f8f9fb;border:2px solid #c4cad4;border-radius:9px;overflow:hidden"></div>
<svg style="left:1225px;top:51px;" width="32" height="29" viewBox="0 0 32 29"><path d="M22,4 L4,4 Q1,4 1,7 L1,25 Q1,28 4,28 L21,28 Q24,28 24,25 L24,16" fill="none" stroke="#6c6d70" stroke-width="3.5"/><path d="M26,0 L31,5 L14,22 L8,23 L9,17Z" fill="#6c6d70" stroke="#f8f9fb" stroke-width="1.2"/></svg>
<svg style="left:1262px;top:58px;" width="16" height="10" viewBox="0 0 16 10"><polyline points="1.5,1.5 8,8 14.5,1.5" fill="none" stroke="#6c6d70" stroke-width="3"/></svg>
<div class="a" style="left:1313px;top:37px;width:133px;height:60px;background:#fff;border:2px solid #c4cad4;border-radius:9px;overflow:hidden"><div class="a" style="left:75px;top:0;width:2px;height:100%;background:#c4cad4"></div></div>
<svg style="left:1338px;top:51px;" width="28" height="28" viewBox="0 0 28 28"><path d="M1,1 L27,1 L17,13 L17,28 L11,24 L11,13Z" fill="#212529" stroke-linejoin="round"/></svg>
<svg style="left:1410px;top:58px;" width="16" height="10" viewBox="0 0 16 10"><polyline points="1.5,1.5 8,8 14.5,1.5" fill="none" stroke="#212529" stroke-width="3"/></svg>
<div class="a" style="left:1463px;top:39px;width:190px;height:55px;background:#fff;border:2px solid #e3e6eb;border-radius:8px"></div>
<div class="t" style="left:1488px;top:52.9px;font-size:26px;color:#212529;font-family:'Liberation Sans', sans-serif;">No limit</div>
<svg style="left:1626px;top:59px;" width="20" height="14" viewBox="0 0 20 14"><polyline points="2,2.5 10,10.5 18,2.5" fill="none" stroke="#212529" stroke-width="4"/></svg>
<div class="a" style="left:1669px;top:38px;width:165px;height:57px;background:#f8f9fb;border:2px solid #c4cad4;border-radius:9px;overflow:hidden"><div class="a" style="left:58px;top:0;width:62px;height:100%;background:#fff"></div><div class="a" style="left:57px;top:0;width:2px;height:100%;background:#c4cad4"></div><div class="a" style="left:119px;top:0;width:2px;height:100%;background:#c4cad4"></div></div>
<div class="a" style="left:1686px;top:53px;width:25px;height:25px;background:#6c6d70;border-radius:3px"></div>
<svg style="left:1746px;top:51px;" width="26" height="29" viewBox="0 0 26 29"><path d="M2,3 Q2,0 5,1.5 L24,12.5 Q26,14.5 24,16.5 L5,27.5 Q2,29 2,26Z" fill="#212529"/></svg>
<svg style="left:1803px;top:58px;" width="16" height="10" viewBox="0 0 16 10"><polyline points="1.5,1.5 8,8 14.5,1.5" fill="none" stroke="#6c6d70" stroke-width="3"/></svg>
<div class="a" style="left:1849px;top:38px;width:164px;height:57px;background:#f8f9fb;border:2px solid #c4cad4;border-radius:9px;overflow:hidden"><div class="a" style="left:57px;top:0;width:2px;height:100%;background:#c4cad4"></div><div class="a" style="left:119px;top:0;width:2px;height:100%;background:#c4cad4"></div></div>
<svg style="left:1867px;top:51px;" width="25" height="29" viewBox="0 0 25 29"><path d="M6,2 Q6,0 8,0 Q10,0 10,2 L10,11 L12,10 Q14,9 15,11 L17,10 Q19,9 20,11 L22,11 Q24,11 24,13 L24,24 Q23,29 18,29 L10,29 Q8,29 6,26 L1,20 Q0,18 2,17 Q4,16 6,18Z" fill="#6c6d70"/><line x1="12" y1="18" x2="12" y2="24" stroke="#f8f9fb" stroke-width="1.2"/><line x1="16" y1="18" x2="16" y2="24" stroke="#f8f9fb" stroke-width="1.2"/><line x1="20" y1="18" x2="20" y2="24" stroke="#f8f9fb" stroke-width="1.2"/></svg>
<svg style="left:1925px;top:53px;" width="28" height="25" viewBox="0 0 28 25"><rect x="0" y="0" width="28" height="25" rx="3" fill="#6c6d70"/><circle cx="6.5" cy="6.5" r="2.2" fill="#f8f9fb"/><circle cx="6.5" cy="12.5" r="2.2" fill="#f8f9fb"/><circle cx="6.5" cy="18.5" r="2.2" fill="#f8f9fb"/><rect x="10" y="5" width="13" height="3" fill="#f8f9fb"/><rect x="10" y="11" width="13" height="3" fill="#f8f9fb"/><rect x="10" y="17" width="13" height="3" fill="#f8f9fb"/></svg>
<svg style="left:1984px;top:58px;" width="16" height="10" viewBox="0 0 16 10"><polyline points="1.5,1.5 8,8 14.5,1.5" fill="none" stroke="#6c6d70" stroke-width="3"/></svg>
<div class="a" style="left:2031px;top:38px;width:125px;height:57px;background:#f8f9fb;border:2px solid #c4cad4;border-radius:9px;overflow:hidden"><div class="a" style="left:59px;top:0;width:2px;height:100%;background:#c4cad4"></div></div>
<svg style="left:2048px;top:56px;" width="20" height="20" viewBox="0 0 20 20"><ellipse cx="10" cy="3.5" rx="10" ry="3.5" fill="#6c6d70"/><path d="M0,6 Q10,10.5 20,6 L20,10 Q10,14.5 0,10Z" fill="#6c6d70"/><path d="M0,12.5 Q10,17 20,12.5 L20,16.5 Q10,21 0,16.5Z" fill="#6c6d70"/></svg>
<svg style="left:2061px;top:67px;" width="14" height="14" viewBox="0 0 14 14"><circle cx="7" cy="7" r="7" fill="#6c6d70" stroke="#f8f9fb" stroke-width="1.5"/><polyline points="3.5,7 6,9.5 10.5,4.5" fill="none" stroke="#f8f9fb" stroke-width="1.8"/></svg>
<svg style="left:2110px;top:56px;" width="20" height="20" viewBox="0 0 20 20"><ellipse cx="10" cy="3.5" rx="10" ry="3.5" fill="#6c6d70"/><path d="M0,6 Q10,10.5 20,6 L20,10 Q10,14.5 0,10Z" fill="#6c6d70"/><path d="M0,12.5 Q10,17 20,12.5 L20,16.5 Q10,21 0,16.5Z" fill="#6c6d70"/></svg>
<svg style="left:2123px;top:67px;" width="14" height="14" viewBox="0 0 14 14"><circle cx="7" cy="7" r="7" fill="#6c6d70" stroke="#f8f9fb" stroke-width="1.5"/><path d="M4,6 L7,3.5 L7,8.5Z" fill="#f8f9fb"/><path d="M6,6 Q10,6 10,9 Q10,11 8,11.5" fill="none" stroke="#f8f9fb" stroke-width="1.6"/></svg>
<div class="a" style="left:2171px;top:38px;width:85px;height:57px;background:#fff;border:2px solid #c4cad4;border-radius:9px;overflow:hidden"></div>
<svg style="left:2188px;top:53px;" width="29" height="26" viewBox="0 0 29 26"><path fill-rule="evenodd" stroke="#212529" stroke-width="1.2" stroke-linejoin="round" d="M16.6,0.8 L27.5,11.8 L19.5,20.6 L27.6,20.6 L27.6,24 L7.5,24 L0.6,16.8 Z M10.3,9.9 L17.8,17.4 L14.4,20.6 L8.1,20.6 L4,16.6 Z" fill="#212529"/></svg>
<svg style="left:2222.6px;top:59.900000000000006px;" width="16" height="10" viewBox="0 0 16 10"><polyline points="1.5,1.5 8,8 14.5,1.5" fill="none" stroke="#212529" stroke-width="3"/></svg>
<div class="a" style="left:2273px;top:38px;width:63px;height:57px;background:#fff;border:2px solid #c4cad4;border-radius:9px;overflow:hidden"></div>
<svg style="left:2290px;top:52px;" width="28" height="28" viewBox="0 0 28 28"><rect x="11" y="0" width="6" height="12" rx="1" fill="#212529"/><path d="M4,11 L24,11 L14,21Z" fill="#212529" stroke="#fff" stroke-width="1.2"/><path d="M0,19 L9,19 L14,23 L19,19 L28,19 L28,27 L0,27Z" fill="#212529"/><rect x="19" y="23" width="2" height="2" fill="#fff"/><rect x="23" y="23" width="2" height="2" fill="#fff"/></svg>
<div class="a" style="left:2343px;top:38px;width:93px;height:57px;background:#f8f9fb;border:2px solid #c4cad4;border-radius:9px;overflow:hidden"></div>
<svg style="left:2361px;top:52px;" width="35" height="28" viewBox="0 0 35 28"><rect x="0" y="0" width="5" height="7" rx="2" fill="#6c6d70"/><path d="M6,0 L23,0 Q30,0 30,7 L30,20 L11,20 L11,24 Q11,28 7,28 Q6,28 6,24Z" fill="#6c6d70"/><path d="M12,21 L35,21 Q34,28 28,28 L9,28 Q12,26 12,21Z" fill="#6c6d70"/></svg>
<svg style="left:2402px;top:59px;" width="16" height="10" viewBox="0 0 16 10"><polyline points="1.5,1.5 8,8 14.5,1.5" fill="none" stroke="#6c6d70" stroke-width="3"/></svg>
<div class="a" style="left:492px;top:102px;width:2210px;height:52px;background:#5b6b7b"></div>
<div class="a" style="left:566px;top:102px;width:2px;height:52px;background:#8494a3"></div>
<svg style="left:503px;top:103px;" width="50" height="50" viewBox="0 0 50 50"><g transform="translate(25,25) rotate(-45)" fill="none" stroke="#fff" stroke-width="3.3"><line x1="-23" y1="0" x2="-14" y2="0"/><line x1="14" y1="0" x2="23" y2="0"/><path d="M-4,-9 L-6,-9 Q-15,-9 -15,0 Q-15,9 -6,9 L-4,9"/><path d="M4,-9 L6,-9 Q15,-9 15,0 Q15,9 6,9 L4,9"/><line x1="-4" y1="-12.5" x2="-4" y2="12.5"/><line x1="4" y1="-12.5" x2="4" y2="12.5"/><line x1="-4" y1="-4" x2="4" y2="-4"/><line x1="-4" y1="4" x2="4" y2="4"/></g></svg>
<div class="t" style="left:574px;top:114.2px;font-size:28px;color:#fff;font-family:'Liberation Sans', sans-serif;">postgres/postgres@PostgreSQL 13</div>
<div class="a" style="left:492px;top:154px;width:2210px;height:62px;background:#fff"></div>
<div class="t" style="left:510px;top:170.2px;font-size:28px;color:#326690;font-family:'Liberation Sans', sans-serif;">Query Editor</div>
<div class="t" style="left:703px;top:170.2px;font-size:28px;color:#222;font-family:'Liberation Sans', sans-serif;">Query History</div>
<div class="a" style="left:492px;top:210px;width:190px;height:6px;background:#326690"></div>
<div class="a" style="left:492px;top:216px;width:2210px;height:2px;background:#dde0e6"></div>
<div class="a" style="left:492px;top:218px;width:2210px;height:206px;background:#f8f9fa"></div>
<div class="a" style="left:492px;top:218px;width:82px;height:206px;background:#f3f4f6"></div>
<div class="t" style="left:528px;top:233.9px;font-size:26px;color:#8a8a8a;font-family:'Liberation Sans', sans-serif;">1</div>
<div class="t" style="left:528px;top:275.9px;font-size:26px;color:#8a8a8a;font-family:'Liberation Sans', sans-serif;">2</div>
<div class="t" style="left:584px;top:235px;font-size:28px;font-family:'Liberation Mono', monospace;color:#c58ac4;font-weight:bold">SELECT <span style="color:#666;font-weight:normal">*</span> FROM public<span style="color:#7ea1c9;font-weight:normal">.json_table</span></div>
<div class="a" style="left:492px;top:424px;width:2210px;height:2px;background:#dde0e6"></div>
<div class="a" style="left:492px;top:426px;width:2210px;height:62px;background:#fff"></div>
<div class="t" style="left:511px;top:442.2px;font-size:28px;color:#326690;font-family:'Liberation Sans', sans-serif;">Data Output</div>
<div class="a" style="left:492px;top:482px;width:130px;height:6px;background:#326690"></div>
<div class="a" style="left:492px;top:488px;width:2210px;height:2px;background:#dde0e6"></div>
<div class="a" style="left:492px;top:490px;width:2210px;height:78px;background:#fff"></div>
<svg style="left:522px;top:540px;" width="20" height="20" viewBox="0 0 20 20"><polygon points="20,0 20,20 0,20" fill="#777"/></svg>
<div class="a" style="left:492px;top:568px;width:2210px;height:2px;background:#dde0e6"></div>
<div class="a" style="left:492px;top:570px;width:2210px;height:1008px;background:#ebecf1"></div>
<div class="a" style="left:492px;top:1400px;width:2210px;height:172px;background:linear-gradient(to bottom,rgba(0,0,0,0),rgba(0,0,0,0.04))"></div>
<div class="a" style="left:492px;top:570px;width:60px;height:48px;background:#fff"></div>
<div class="a" style="left:492px;top:618px;width:60px;height:2px;background:#dde0e6"></div>
<div class="t" style="left:492px;top:582px;width:60px;text-align:center;font-size:26px;color:#222">1</div>
<div class="a" style="left:492px;top:620px;width:60px;height:48px;background:#fff"></div>
<div class="a" style="left:492px;top:668px;width:60px;height:2px;background:#dde0e6"></div>
<div class="t" style="left:492px;top:632px;width:60px;text-align:center;font-size:26px;color:#222">2</div>
<div class="a" style="left:492px;top:670px;width:60px;height:48px;background:#fff"></div>
<div class="a" style="left:492px;top:718px;width:60px;height:2px;background:#dde0e6"></div>
<div class="t" style="left:492px;top:682px;width:60px;text-align:center;font-size:26px;color:#222">3</div>
<div class="a" style="left:492px;top:720px;width:60px;height:48px;background:#fff"></div>
<div class="a" style="left:492px;top:768px;width:60px;height:2px;background:#dde0e6"></div>
<div class="t" style="left:492px;top:732px;width:60px;text-align:center;font-size:26px;color:#222">4</div>
<div class="a" style="left:492px;top:770px;width:60px;height:48px;background:#fff"></div>
<div class="a" style="left:492px;top:818px;width:60px;height:2px;background:#dde0e6"></div>
<div class="t" style="left:492px;top:782px;width:60px;text-align:center;font-size:26px;color:#222">5</div>
<div class="a" style="left:492px;top:820px;width:60px;height:48px;background:#fff"></div>
<div class="a" style="left:492px;top:868px;width:60px;height:2px;background:#dde0e6"></div>
<div class="t" style="left:492px;top:832px;width:60px;text-align:center;font-size:26px;color:#222">6</div>
<div class="a" style="left:492px;top:870px;width:60px;height:48px;background:#3d6590"></div>
<div class="a" style="left:492px;top:918px;width:60px;height:2px;background:#dde0e6"></div>
<div class="t" style="left:492px;top:882px;width:60px;text-align:center;font-size:26px;color:#fff">7</div>
<div class="a" style="left:492px;top:920px;width:60px;height:48px;background:#fff"></div>
<div class="a" style="left:492px;top:968px;width:60px;height:2px;background:#dde0e6"></div>
<div class="t" style="left:492px;top:932px;width:60px;text-align:center;font-size:26px;color:#222">8</div>
<div class="a" style="left:492px;top:970px;width:60px;height:48px;background:#fff"></div>
<div class="a" style="left:492px;top:1018px;width:60px;height:2px;background:#dde0e6"></div>
<div class="a" style="left:550px;top:490px;width:2px;height:530px;background:#dde0e6"></div>
<div class="a" style="left:492px;top:1572px;width:2210px;height:6px;background:#efefef"></div>
<div class="a" style="left:553px;top:254px;width:1536px;height:1266px;background:#fff;border:2px solid #dde0e6;box-shadow:0 6px 22px rgba(40,50,70,0.22)"></div>
<div class="a" style="left:562px;top:264px;width:1518px;height:1191px;background:#d3d3d3"></div>
<div class="a" style="left:564px;top:266px;width:1514px;height:1188px;background:#4a84ef"></div>
<svg style="left:584px;top:282px;" width="32" height="40" viewBox="0 0 32 40"><polygon points="16,0 24.5,9.5 7.5,9.5" fill="#c3d5fa"/><rect x="13" y="9" width="6" height="5" fill="#c3d5fa"/><rect x="0" y="18" width="32" height="4" fill="#c3d5fa"/><rect x="13" y="26" width="6" height="5" fill="#c3d5fa"/><polygon points="16,40 24.5,30.5 7.5,30.5" fill="#c3d5fa"/></svg>
<svg style="left:644px;top:285px;" width="32" height="34" viewBox="0 0 32 34"><rect x="13" y="1" width="6" height="4.5" fill="#c3d5fa"/><polygon points="16,14.2 24,5 8,5" fill="#c3d5fa"/><rect x="0" y="15" width="32" height="4" fill="#c3d5fa"/><polygon points="16,19.7 24,28.9 8,28.9" fill="#c3d5fa"/><rect x="13" y="28.5" width="6" height="4.5" fill="#c3d5fa"/></svg>
<svg style="left:712px;top:282px;" width="44" height="36" viewBox="0 0 44 36"><path d="M13,9 A12.75,12.75 0 1 1 22,30.75" fill="none" stroke="#4a7bd4" stroke-width="6.2"/><polygon points="8.4,3.5 3.7,18 19,14.6" fill="#4a7bd4"/></svg>
<svg style="left:772px;top:282px;" width="44" height="36" viewBox="0 0 44 36"><path d="M30.7,9 A12.75,12.75 0 1 0 21.7,30.75" fill="none" stroke="#4a7bd4" stroke-width="6.2"/><polygon points="35.8,3.5 40.7,18 25.5,14.6" fill="#4a7bd4"/></svg>
<div class="t" style="left:861px;top:287.9px;font-size:26px;color:#edf2fd;font-family:'Liberation Sans', sans-serif;">Form</div>
<svg style="left:930px;top:299px;" width="16" height="8" viewBox="0 0 16 8"><polygon points="0,0 16,0 8,8" fill="#edf2fd"/></svg>
<div class="t" style="left:1545px;top:288.2px;font-size:28px;color:#fff;font-family:'Liberation Sans', sans-serif;">999+ results</div>
<div class="a" style="left:1708px;top:276px;width:360px;height:52px;background:#fff"></div>
<svg style="left:1717px;top:284px;" width="31" height="31" viewBox="0 0 31 31"><circle cx="20" cy="11" r="8.5" fill="none" stroke="#c8c8c8" stroke-width="4"/><line x1="13.5" y1="17.5" x2="3" y2="28" stroke="#c8c8c8" stroke-width="6" stroke-linecap="round"/></svg>
<div class="t" style="left:1758px;top:285.9px;font-size:26px;color:#111;font-family:'Liberation Sans', sans-serif;">oid</div>
<div class="a" style="left:1761px;top:310px;width:5px;height:5px;background:#e8574a;border-radius:50%"></div>
<div class="a" style="left:1769px;top:310px;width:5px;height:5px;background:#e8574a;border-radius:50%"></div>
<div class="a" style="left:1777px;top:310px;width:5px;height:5px;background:#e8574a;border-radius:50%"></div>
<div class="a" style="left:1785px;top:310px;width:5px;height:5px;background:#e8574a;border-radius:50%"></div>
<svg style="left:1996px;top:292px;" width="27" height="16" viewBox="0 0 27 16"><polygon points="0,0 27,0 13.5,16" fill="#c8c8c8"/></svg>
<svg style="left:2029px;top:292px;" width="27" height="16" viewBox="0 0 27 16"><polygon points="0,16 27,16 13.5,0" fill="#c8c8c8"/></svg>
<div class="a" style="left:566px;top:338px;width:1510px;height:50px;background:#ebebeb"></div>
<div class="a" style="left:566px;top:388px;width:1510px;height:2px;background:#d3d3d3"></div>
<div class="t" style="left:579px;top:348.9px;font-size:26px;color:#808080;font-family:'Liberation Sans', sans-serif;">array</div>
<svg style="left:648px;top:356px;" width="17" height="16" viewBox="0 0 17 16"><polygon points="0,0 17,8 0,16" fill="#808080"/></svg>
<div class="t" style="left:675px;top:348.9px;font-size:26px;color:#808080;font-family:'Liberation Sans', sans-serif;">0</div>
<svg style="left:699px;top:356px;" width="17" height="16" viewBox="0 0 17 16"><polygon points="0,0 17,8 0,16" fill="#808080"/></svg>
<div class="a" style="left:566px;top:390px;width:1510px;height:1062px;background:#fff;overflow:hidden"></div>
<div class="a" style="left:2044px;top:390px;width:32px;height:1062px;background:#f1f2f4"></div>
<div class="a" style="left:2052px;top:398px;width:16px;height:184px;background:#c8cdd6;border-radius:8px"></div>
<svg style="left:581px;top:407px;" width="17" height="15" viewBox="0 0 17 15"><polygon points="0,0 17,0 8.5,15" fill="#5f5f5f"/></svg>
<div class="t" style="left:623px;top:401.7px;font-size:26.5px;font-family:'Liberation Mono', monospace;color:#808080;font-style:italic">array</div>
<div class="t" style="left:718px;top:401.7px;font-size:26.5px;font-family:'Liberation Mono', monospace;color:#1a1a1a;">[1052]</div>
<svg style="left:630px;top:459px;" width="17" height="15" viewBox="0 0 17 15"><polygon points="0,0 17,0 8.5,15" fill="#5f5f5f"/></svg>
<div class="t" style="left:670px;top:453.7px;font-size:26.5px;font-family:'Liberation Mono', monospace;color:#808080;font-style:italic">0</div>
<div class="t" style="left:708px;top:453.7px;font-size:26.5px;font-family:'Liberation Mono', monospace;color:#1a1a1a;">{7}</div>
<div class="a" style="left:712px;top:496px;width:64px;height:40px;background:#ffee44;border:2px solid #fcc33a;border-radius:5px"></div>
<div class="t" style="left:719px;top:505.4px;font-size:26.5px;font-family:'Liberation Mono', monospace;color:#1a1a1a;">oid</div>
<svg style="left:780.7px;top:510.70000000000005px;" width="6" height="16" viewBox="0 0 6 16"><circle cx="3" cy="3" r="2.6" fill="#888"/><circle cx="3" cy="13" r="2.6" fill="#888"/></svg>
<div class="t" style="left:801.7px;top:505.4px;font-size:26.5px;font-family:'Liberation Mono', monospace;color:#e0442e;">950</div>
<div class="t" style="left:719px;top:557.4px;font-size:26.5px;font-family:'Liberation Mono', monospace;color:#1a1a1a;">name</div>
<svg style="left:796.6px;top:562.7px;" width="6" height="16" viewBox="0 0 6 16"><circle cx="3" cy="3" r="2.6" fill="#888"/><circle cx="3" cy="13" r="2.6" fill="#888"/></svg>
<div class="t" style="left:817.6px;top:557.4px;font-size:26.5px;font-family:'Liberation Mono', monospace;color:#0d640d;">C</div>
<div class="t" style="left:719px;top:609.4px;font-size:26.5px;font-family:'Liberation Mono', monospace;color:#1a1a1a;">lc_collate</div>
<svg style="left:892.0px;top:614.7px;" width="6" height="16" viewBox="0 0 6 16"><circle cx="3" cy="3" r="2.6" fill="#888"/><circle cx="3" cy="13" r="2.6" fill="#888"/></svg>
<div class="t" style="left:913.0px;top:609.4px;font-size:26.5px;font-family:'Liberation Mono', monospace;color:#0d640d;">C</div>
<div class="t" style="left:719px;top:661.4px;font-size:26.5px;font-family:'Liberation Mono', monospace;color:#1a1a1a;">lc_type</div>
<svg style="left:844.3px;top:666.7px;" width="6" height="16" viewBox="0 0 6 16"><circle cx="3" cy="3" r="2.6" fill="#888"/><circle cx="3" cy="13" r="2.6" fill="#888"/></svg>
<div class="t" style="left:865.3px;top:661.4px;font-size:26.5px;font-family:'Liberation Mono', monospace;color:#0d640d;">C</div>
<div class="t" style="left:719px;top:713.4px;font-size:26.5px;font-family:'Liberation Mono', monospace;color:#1a1a1a;">owner</div>
<svg style="left:812.5px;top:718.7px;" width="6" height="16" viewBox="0 0 6 16"><circle cx="3" cy="3" r="2.6" fill="#888"/><circle cx="3" cy="13" r="2.6" fill="#888"/></svg>
<div class="t" style="left:833.5px;top:713.4px;font-size:26.5px;font-family:'Liberation Mono', monospace;color:#0d640d;">postgres</div>
<div class="t" style="left:719px;top:765.4px;font-size:26.5px;font-family:'Liberation Mono', monospace;color:#1a1a1a;">description</div>
<svg style="left:907.9px;top:770.7px;" width="6" height="16" viewBox="0 0 6 16"><circle cx="3" cy="3" r="2.6" fill="#888"/><circle cx="3" cy="13" r="2.6" fill="#888"/></svg>
<div class="t" style="left:928.9px;top:765.4px;font-size:26.5px;font-family:'Liberation Mono', monospace;color:#0d640d;">standard C collation</div>
<div class="t" style="left:719px;top:817.4px;font-size:26.5px;font-family:'Liberation Mono', monospace;color:#1a1a1a;">schema</div>
<svg style="left:828.4px;top:822.7px;" width="6" height="16" viewBox="0 0 6 16"><circle cx="3" cy="3" r="2.6" fill="#888"/><circle cx="3" cy="13" r="2.6" fill="#888"/></svg>
<div class="t" style="left:849.4px;top:817.4px;font-size:26.5px;font-family:'Liberation Mono', monospace;color:#0d640d;">pg_catalog</div>
<svg style="left:631px;top:872.7px;" width="16" height="18" viewBox="0 0 16 18"><polygon points="0,0 16,9 0,18" fill="#5f5f5f"/></svg>
<div class="t" style="left:670px;top:869.4px;font-size:26.5px;font-family:'Liberation Mono', monospace;color:#808080;">1</div>
<div class="t" style="left:708.0px;top:869.4px;font-size:26.5px;font-family:'Liberation Mono', monospace;color:#1a1a1a;">{7}</div>
<svg style="left:631px;top:924.7px;" width="16" height="18" viewBox="0 0 16 18"><polygon points="0,0 16,9 0,18" fill="#5f5f5f"/></svg>
<div class="t" style="left:670px;top:921.4px;font-size:26.5px;font-family:'Liberation Mono', monospace;color:#808080;">2</div>
<div class="t" style="left:708.0px;top:921.4px;font-size:26.5px;font-family:'Liberation Mono', monospace;color:#1a1a1a;">{7}</div>
<svg style="left:631px;top:976.7px;" width="16" height="18" viewBox="0 0 16 18"><polygon points="0,0 16,9 0,18" fill="#5f5f5f"/></svg>
<div class="t" style="left:670px;top:973.4px;font-size:26.5px;font-family:'Liberation Mono', monospace;color:#808080;">3</div>
<div class="t" style="left:708.0px;top:973.4px;font-size:26.5px;font-family:'Liberation Mono', monospace;color:#1a1a1a;">{7}</div>
<svg style="left:631px;top:1028.7px;" width="16" height="18" viewBox="0 0 16 18"><polygon points="0,0 16,9 0,18" fill="#5f5f5f"/></svg>
<div class="t" style="left:670px;top:1025.4px;font-size:26.5px;font-family:'Liberation Mono', monospace;color:#808080;">4</div>
<div class="t" style="left:708.0px;top:1025.4px;font-size:26.5px;font-family:'Liberation Mono', monospace;color:#1a1a1a;">{7}</div>
<svg style="left:631px;top:1080.7px;" width="16" height="18" viewBox="0 0 16 18"><polygon points="0,0 16,9 0,18" fill="#5f5f5f"/></svg>
<div class="t" style="left:670px;top:1077.4px;font-size:26.5px;font-family:'Liberation Mono', monospace;color:#808080;">5</div>
<div class="t" style="left:708.0px;top:1077.4px;font-size:26.5px;font-family:'Liberation Mono', monospace;color:#1a1a1a;">{7}</div>
<svg style="left:631px;top:1132.7px;" width="16" height="18" viewBox="0 0 16 18"><polygon points="0,0 16,9 0,18" fill="#5f5f5f"/></svg>
<div class="t" style="left:670px;top:1129.4px;font-size:26.5px;font-family:'Liberation Mono', monospace;color:#808080;">6</div>
<div class="t" style="left:708.0px;top:1129.4px;font-size:26.5px;font-family:'Liberation Mono', monospace;color:#1a1a1a;">{7}</div>
<svg style="left:631px;top:1184.7px;" width="16" height="18" viewBox="0 0 16 18"><polygon points="0,0 16,9 0,18" fill="#5f5f5f"/></svg>
<div class="t" style="left:670px;top:1181.4px;font-size:26.5px;font-family:'Liberation Mono', monospace;color:#808080;">7</div>
<div class="t" style="left:708.0px;top:1181.4px;font-size:26.5px;font-family:'Liberation Mono', monospace;color:#1a1a1a;">{7}</div>
<svg style="left:631px;top:1236.7px;" width="16" height="18" viewBox="0 0 16 18"><polygon points="0,0 16,9 0,18" fill="#5f5f5f"/></svg>
<div class="t" style="left:670px;top:1233.4px;font-size:26.5px;font-family:'Liberation Mono', monospace;color:#808080;">8</div>
<div class="t" style="left:708.0px;top:1233.4px;font-size:26.5px;font-family:'Liberation Mono', monospace;color:#1a1a1a;">{7}</div>
<svg style="left:631px;top:1288.7px;" width="16" height="18" viewBox="0 0 16 18"><polygon points="0,0 16,9 0,18" fill="#5f5f5f"/></svg>
<div class="t" style="left:670px;top:1285.4px;font-size:26.5px;font-family:'Liberation Mono', monospace;color:#808080;">9</div>
<div class="t" style="left:708.0px;top:1285.4px;font-size:26.5px;font-family:'Liberation Mono', monospace;color:#1a1a1a;">{7}</div>
<svg style="left:631px;top:1340.7px;" width="16" height="18" viewBox="0 0 16 18"><polygon points="0,0 16,9 0,18" fill="#5f5f5f"/></svg>
<div class="t" style="left:670px;top:1337.4px;font-size:26.5px;font-family:'Liberation Mono', monospace;color:#808080;">10</div>
<div class="t" style="left:720.5px;top:1337.4px;font-size:26.5px;font-family:'Liberation Mono', monospace;color:#1a1a1a;">{7}</div>
<svg style="left:631px;top:1392.7px;" width="16" height="18" viewBox="0 0 16 18"><polygon points="0,0 16,9 0,18" fill="#5f5f5f"/></svg>
<div class="t" style="left:670px;top:1389.4px;font-size:26.5px;font-family:'Liberation Mono', monospace;color:#808080;">11</div>
<div class="t" style="left:720.5px;top:1389.4px;font-size:26.5px;font-family:'Liberation Mono', monospace;color:#1a1a1a;">{7}</div>
<svg style="left:631px;top:1444.7px;" width="16" height="18" viewBox="0 0 16 18"><polygon points="0,0 16,9 0,18" fill="#5f5f5f"/></svg>
<div class="t" style="left:670px;top:1441.4px;font-size:26.5px;font-family:'Liberation Mono', monospace;color:#808080;">12</div>
<div class="t" style="left:720.5px;top:1441.4px;font-size:26.5px;font-family:'Liberation Mono', monospace;color:#1a1a1a;">{7}</div>
<div class="a" style="left:564px;top:1452px;width:1514px;height:2px;background:#4a84ef"></div>
<div class="a" style="left:566px;top:1454px;width:1510px;height:0px;"></div>
<div class="a" style="left:555px;top:1455px;width:1532px;height:63px;background:#fff"></div>
<div class="a" style="left:562px;top:1454px;width:1518px;height:2px;background:#d3d3d3"></div>
<div class="a" style="left:1803px;top:1457px;width:149px;height:55px;background:#fff;border:2px solid #bac1cd;border-radius:10px"></div>
<svg style="left:1828px;top:1472px;" width="20" height="19" viewBox="0 0 20 19"><g stroke="#222" stroke-width="5" stroke-linecap="round"><line x1="3" y1="3" x2="17" y2="16"/><line x1="17" y1="3" x2="3" y2="16"/></g></svg>
<div class="t" style="left:1854px;top:1472.0px;font-size:23.5px;color:#222;font-family:'Liberation Sans', sans-serif;">Cancel</div>
<div class="a" style="left:1962px;top:1456px;width:118px;height:56px;background:#3d6590;border-radius:10px"></div>
<svg style="left:1988px;top:1471px;" width="29" height="22" viewBox="0 0 29 22"><polyline points="3,11 10,18 26,3" fill="none" stroke="#fff" stroke-width="5.5" stroke-linecap="round"/></svg>
<div class="t" style="left:2024px;top:1472.5px;font-size:23px;color:#fff;font-family:'Liberation Sans', sans-serif;">OK</div>
</body></html>
